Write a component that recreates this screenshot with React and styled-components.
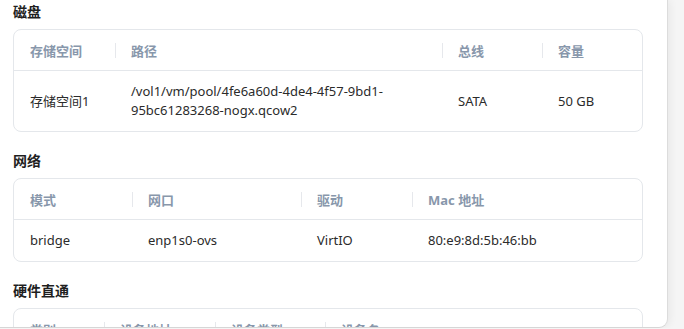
import styled, { createGlobalStyle } from 'styled-components';

const GlobalStyle = createGlobalStyle`
  html, body {
    margin: 0;
    padding: 0;
    background: #f5f5f5;
    overflow: hidden;
  }
  body {
    font-family: "Noto Sans", "Noto Sans CJK SC", sans-serif;
  }
`;

const Panel = styled.div`
  width: 668px;
  height: 328px;
  box-sizing: border-box;
  background: #fff;
  border-right: 1px solid #dcdcdc;
  border-bottom: 1px solid #d6d6d6;
  border-bottom-right-radius: 9px;
  box-shadow: 2px 0 8px rgba(0, 0, 0, 0.06);
  overflow: hidden;
  padding: 2px 24px 0 13px;
`;

const Section = styled.section`
  margin-bottom: 19px;
`;

const Title = styled.h4`
  margin: 0 0 7px;
  font-size: 14px;
  line-height: 20px;
  font-weight: 700;
  color: #1f1f1f;
`;

const Card = styled.div`
  border: 1px solid #e4e7eb;
  border-radius: 8px;
  overflow: hidden;
`;

const Row = styled.div`
  display: grid;
  grid-template-columns: ${({ $cols }) => $cols};
  align-items: center;
  min-height: 40px;
  border-bottom: ${({ $head }) => ($head ? '1px solid #e4e7eb' : 'none')};
`;

const HeadCell = styled.div`
  position: relative;
  padding: 1px 16px 0;
  font-size: 13px;
  font-weight: 700;
  color: #8897ab;
  line-height: 20px;

  & + &::before {
    content: '';
    position: absolute;
    left: 0;
    top: 50%;
    height: 15px;
    margin-top: -7px;
    width: 1px;
    background: #e6e8ec;
  }
`;

const Cell = styled.div`
  padding: 11px 16px;
  font-size: 13px;
  line-height: 19px;
  color: #2b2b2b;
  overflow-wrap: anywhere;
`;

const sections = [
  {
    title: '磁盘',
    cols: '101px 327px 100px 1fr',
    head: ['存储空间', '路径', '总线', '容量'],
    rows: [
      ['存储空间1', '/vol1/vm/pool/4fe6a60d-4de4-4f57-9bd1-95bc61283268-nogx.qcow2', 'SATA', '50 GB'],
    ],
  },
  {
    title: '网络',
    cols: '118px 169px 111px 1fr',
    head: ['模式', '网口', '驱动', 'Mac 地址'],
    rows: [['bridge', 'enp1s0-ovs', 'VirtIO', '80:e9:8d:5b:46:bb']],
  },
  {
    title: '硬件直通',
    cols: '90px 111px 110px 1fr',
    head: ['类别', '设备地址', '设备类型', '设备名'],
    rows: [],
  },
];

export default function App() {
  return (
    <>
      <GlobalStyle />
      <Panel>
        {sections.map((s) => (
          <Section key={s.title}>
            <Title>{s.title}</Title>
            <Card>
              <Row $cols={s.cols} $head>
                {s.head.map((h) => (
                  <HeadCell key={h}>{h}</HeadCell>
                ))}
              </Row>
              {s.rows.map((r, i) => (
                <Row key={i} $cols={s.cols}>
                  {r.map((c, j) => (
                    <Cell key={j}>{c}</Cell>
                  ))}
                </Row>
              ))}
            </Card>
          </Section>
        ))}
      </Panel>
    </>
  );
}
